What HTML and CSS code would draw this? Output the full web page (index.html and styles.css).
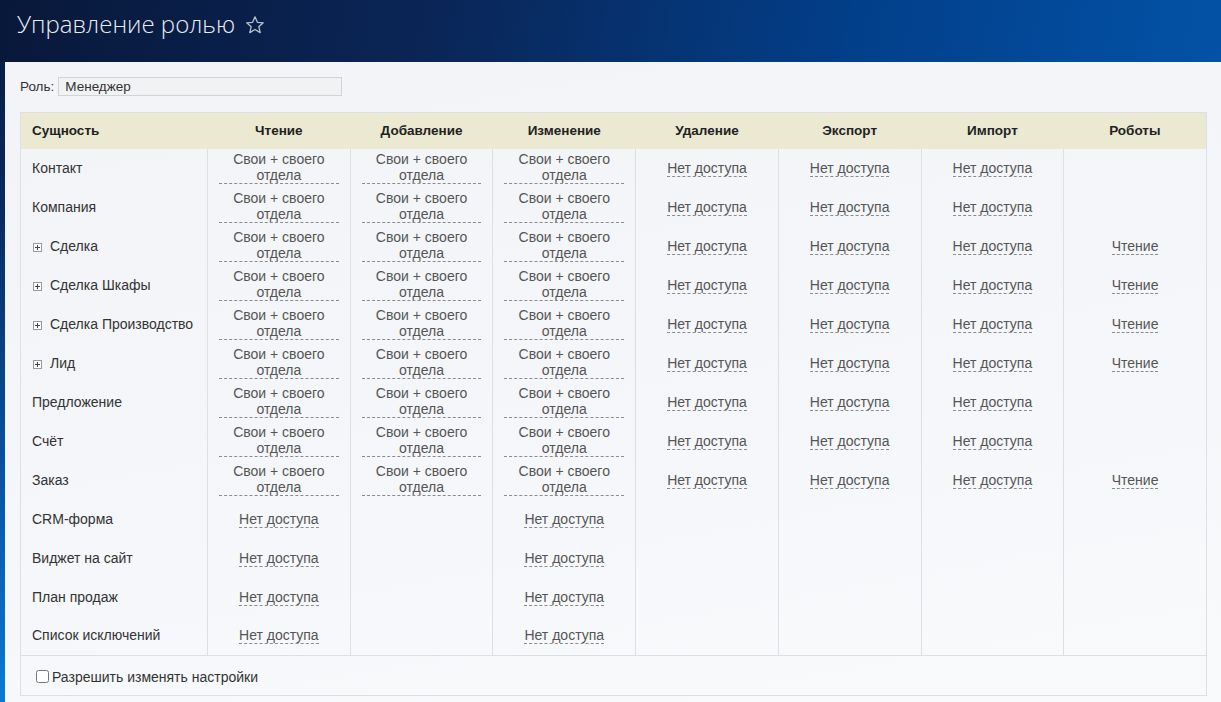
FILE: index.html
```html
<!DOCTYPE html>
<html lang="ru">
<head>
<meta charset="utf-8">
<title>Управление ролью</title>
<link rel="stylesheet" href="styles.css">
</head>
<body>
<div class="page">
  <header class="topbar">
    <h1 class="title">Управление ролью</h1>
    <svg class="star" width="20" height="20" viewBox="0 0 20 20"><path d="M10 1.8 L12.4 7.3 L18.3 7.8 L13.8 11.7 L15.2 17.6 L10 14.5 L4.8 17.6 L6.2 11.7 L1.7 7.8 L7.6 7.3 Z" fill="none" stroke="#b8c0cc" stroke-width="1.3" stroke-linejoin="round"/></svg>
  </header>
  <main class="panel">
    <div class="role-row">
      <label class="role-label">Роль:</label>
      <input class="role-input" type="text" value="Менеджер">
    </div>
    <table class="perm">
      <colgroup>
        <col class="c-ent"><col class="c-p"><col class="c-p"><col class="c-p"><col class="c-p"><col class="c-p"><col class="c-p"><col class="c-p">
      </colgroup>
      <thead>
        <tr>
          <th class="ent">Сущность</th><th>Чтение</th><th>Добавление</th><th>Изменение</th><th>Удаление</th><th>Экспорт</th><th>Импорт</th><th>Роботы</th>
        </tr>
      </thead>
      <tbody id="rows"></tbody>
      <tfoot>
        <tr><td colspan="8" class="foot"><label class="chk"><input type="checkbox"><span>Разрешить изменять настройки</span></label></td></tr>
      </tfoot>
    </table>
  </main>
</div>
<script src="app.js"></script>
</body>
</html>
```
FILE: styles.css
```css
html, body { margin: 0; padding: 0; }
body {
  font-family: "Liberation Sans", Arial, sans-serif;
  font-size: 14px;
  color: #333;
  width: 1221px;
  height: 702px;
  overflow: hidden;
  background: linear-gradient(180deg, #07183b 0%, #0a2a62 30%, #0756a8 70%, #0a7ad4 100%);
}
.page { display: flex; flex-direction: column; height: 702px; }
.topbar {
  height: 62px;
  box-sizing: border-box;
  display: flex;
  align-items: center;
  padding: 0 0 14px 17px;
  background: linear-gradient(100deg, #08183a 0%, #0a2556 35%, #023f8a 70%, #0352a6 100%);
}
.title {
  margin: 0;
  font-family: "Open Sans", "Liberation Sans", sans-serif;
  font-weight: 300;
  font-size: 24px;
  line-height: 30px;
  color: #e9edf3;
}
.star { margin-left: 10px; margin-top: 2px; }
.panel {
  margin-left: 5px;
  flex: 1;
  padding: 15px 14px 0 15px;
  background: linear-gradient(170deg, #f2f4f7 0%, #f4f6f9 50%, #f9fafc 100%);
}
.role-row { display: flex; align-items: center; height: 19px; margin-bottom: 16px; }
.role-label { margin-right: 4px; font-size: 13.5px; color: #333; }
.role-input {
  width: 284px;
  height: 19px;
  box-sizing: border-box;
  border: 1px solid #d0d3d7;
  background: #f1f2f4;
  font-family: "Liberation Sans", Arial, sans-serif;
  font-size: 13.5px;
  color: #333;
  padding: 0 6px;
  margin: 0;
}
.perm {
  width: 1187px;
  border-collapse: collapse;
  table-layout: fixed;
  border: 1px solid #dcdfe3;
}
.c-ent { width: 187px; }
.perm th {
  background: #ebe9d2;
  height: 36px;
  padding: 0 11px 1px;
  font-weight: bold;
  font-size: 13.5px;
  color: #222;
  text-align: center;
  border: none;
  box-sizing: border-box;
}
.perm th.ent { text-align: left; }
.perm tbody td {
  height: 39px;
  padding: 0 11px 1px;
  box-sizing: border-box;
  text-align: center;
  vertical-align: middle;
  border-left: 1px solid #dcdfe3;
  border-right: 1px solid #dcdfe3;
  color: #555;
  line-height: 16px;
}
.perm tbody td.ent { text-align: left; color: #333; border-left: none; }
.plus {
  display: inline-block;
  width: 9px;
  height: 9px;
  box-sizing: border-box;
  border: 1px solid #9a9a9a;
  background: #fff;
  position: relative;
  margin: 0 8px 0 1px;
  vertical-align: -1px;
}
.plus::before, .plus::after {
  content: "";
  position: absolute;
  background: #444;
}
.plus::before { left: 1px; top: 3px; width: 5px; height: 1px; }
.plus::after { left: 3px; top: 1px; width: 1px; height: 5px; }
.own {
  display: block;
  border-bottom: 1px dashed #8c8c8c;
}
.none {
  border-bottom: 1px dashed #8c8c8c;
}
.foot {
  height: 40px;
  padding: 2px 0 0 15px;
  border-top: 1px solid #dcdfe3;
  box-sizing: border-box;
}
.chk { display: flex; align-items: center; color: #333; font-size: 14px; }
.chk input {
  width: 13px;
  height: 13px;
  margin: 0 3px 0 0;
}
```
FILE: app.js
```js
var S = '<span class="own">Свои + своего отдела</span>';
var N = '<span class="none">Нет доступа</span>';
var R = '<span class="none">Чтение</span>';
var rows = [
  ['Контакт', 0, [S,S,S,N,N,N,'']],
  ['Компания', 0, [S,S,S,N,N,N,'']],
  ['Сделка', 1, [S,S,S,N,N,N,R]],
  ['Сделка Шкафы', 1, [S,S,S,N,N,N,R]],
  ['Сделка Производство', 1, [S,S,S,N,N,N,R]],
  ['Лид', 1, [S,S,S,N,N,N,R]],
  ['Предложение', 0, [S,S,S,N,N,N,'']],
  ['Счёт', 0, [S,S,S,N,N,N,'']],
  ['Заказ', 0, [S,S,S,N,N,N,R]],
  ['CRM-форма', 0, [N,'',N,'','','','']],
  ['Виджет на сайт', 0, [N,'',N,'','','','']],
  ['План продаж', 0, [N,'',N,'','','','']],
  ['Список исключений', 0, [N,'',N,'','','','']]
];
var html = '';
rows.forEach(function (r) {
  html += '<tr><td class="ent">' + (r[1] ? '<span class="plus"></span>' : '') + r[0] + '</td>';
  r[2].forEach(function (c) { html += '<td>' + c + '</td>'; });
  html += '</tr>';
});
document.getElementById('rows').innerHTML = html;
```
